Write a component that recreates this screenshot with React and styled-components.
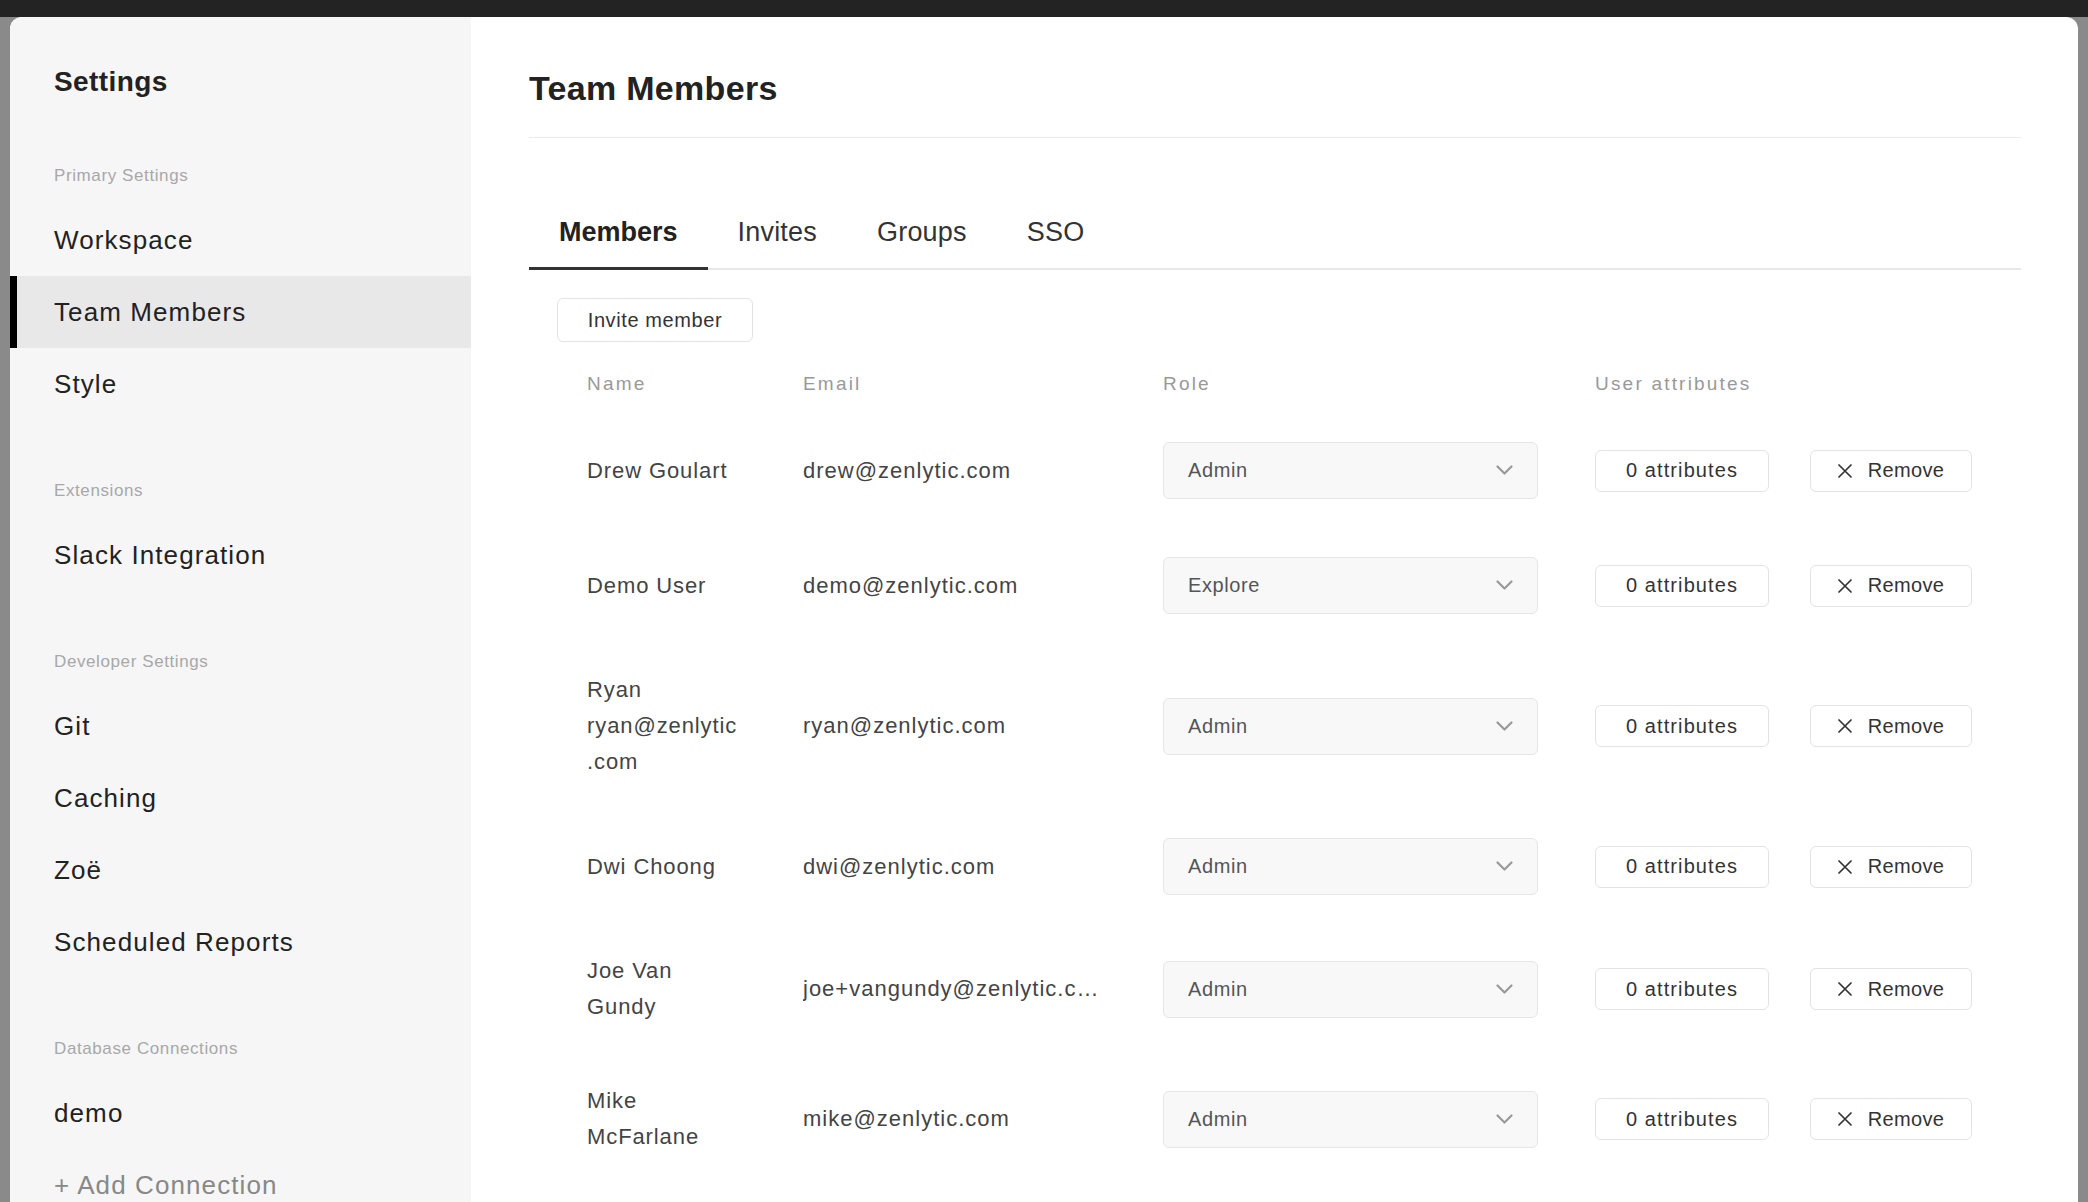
import React from "react";
import styled, { createGlobalStyle } from "styled-components";

const GlobalStyle = createGlobalStyle`
  html, body {
    margin: 0;
    padding: 0;
  }
  body {
    font-family: "Liberation Sans", Arial, sans-serif;
    color: #222;
    overflow: hidden;
  }
  * {
    box-sizing: border-box;
  }
`;

const Page = styled.div`
  height: 100vh;
  display: flex;
  flex-direction: column;
  background: #8a8a8a;
  overflow: hidden;
`;

const TopBar = styled.div`
  height: 17px;
  flex: none;
  background: #232323;
`;

const Backdrop = styled.div`
  flex: 1;
  min-height: 0;
  padding: 0 10px;
`;

const Modal = styled.div`
  height: 100%;
  display: flex;
  background: #fff;
  border-radius: 12px 12px 0 0;
  overflow: hidden;
`;

const Sidebar = styled.aside`
  width: 461px;
  flex: none;
  background: #f6f6f6;
  padding-top: 47px;
`;

const SidebarTitle = styled.div`
  padding: 0 0 5px 44px;
  font-size: 28px;
  line-height: 36px;
  font-weight: 700;
  letter-spacing: 0.4px;
  color: #222;
`;

const Section = styled.div`
  margin-top: 59px;
`;

const SectionLabel = styled.div`
  padding-left: 44px;
  font-size: 17px;
  line-height: 24px;
  letter-spacing: 0.6px;
  color: #a8a8a8;
  margin-bottom: 16px;
`;

const NavItem = styled.div`
  height: 72px;
  line-height: 72px;
  padding-left: ${({ $active }) => ($active ? "37px" : "44px")};
  border-left: ${({ $active }) => ($active ? "7px solid #000" : "none")};
  background: ${({ $active }) => ($active ? "#e8e8e8" : "transparent")};
  font-size: 26px;
  letter-spacing: 1.1px;
  color: ${({ $muted }) => ($muted ? "#888" : "#222")};
  white-space: nowrap;
`;

const Main = styled.main`
  flex: 1;
  min-width: 0;
  padding: 49px 57px 0 58px;
`;

const PageHeader = styled.div`
  padding-bottom: 27px;
  border-bottom: 1px solid #ececec;
`;

const PageTitle = styled.h1`
  margin: 0;
  font-size: 34px;
  line-height: 44px;
  font-weight: 700;
  letter-spacing: 0.3px;
  color: #222;
`;

const TabBar = styled.div`
  display: flex;
  margin-top: 76px;
  border-bottom: 2px solid #e8e8e8;
`;

const Tab = styled.div`
  padding: 0 30px 17px;
  margin-bottom: -2px;
  border-bottom: 3px solid ${({ $active }) => ($active ? "#333" : "transparent")};
  font-size: 27px;
  line-height: 36px;
  font-weight: ${({ $active }) => ($active ? 700 : 400)};
  letter-spacing: ${({ $active }) => ($active ? "0" : "0.2px")};
  color: ${({ $active }) => ($active ? "#222" : "#333")};
`;

const Toolbar = styled.div`
  margin-top: 28px;
  padding-left: 28px;
`;

const OutlineButton = styled.button`
  display: inline-flex;
  align-items: center;
  justify-content: center;
  gap: 16px;
  width: ${({ $width }) => $width}px;
  height: ${({ $tall }) => ($tall ? "44px" : "42px")};
  padding: 0;
  background: #fff;
  border: 1px solid #e3e3e3;
  border-radius: 6px;
  font-family: "Liberation Sans", Arial, sans-serif;
  font-size: 20px;
  letter-spacing: ${({ $spacing }) => $spacing || 0.6}px;
  color: #333;
  cursor: pointer;
`;

const Table = styled.div`
  margin-left: 58px;
`;

const Row = styled.div`
  display: grid;
  grid-template-columns: 216px 360px 432px 215px 1fr;
  align-items: center;
  padding: 29px 0;
`;

const HeadRow = styled(Row)`
  padding: 0;
  margin-top: 30px;
  margin-bottom: 17px;
`;

const HeadCell = styled.div`
  font-size: 19px;
  line-height: 24px;
  letter-spacing: 2.2px;
  color: #999;
`;

const NameCell = styled.div`
  max-width: 155px;
  font-size: 22px;
  line-height: 36px;
  letter-spacing: 0.9px;
  color: #444;
  overflow-wrap: anywhere;
`;

const EmailCell = styled.div`
  max-width: 300px;
  font-size: 22px;
  line-height: 36px;
  letter-spacing: 1px;
  color: #444;
  white-space: nowrap;
  overflow: hidden;
  text-overflow: ellipsis;
`;

const Select = styled.div`
  width: 375px;
  height: 57px;
  display: flex;
  align-items: center;
  justify-content: space-between;
  padding: 0 24px;
  background: #f8f8f8;
  border: 1px solid #e6e6e6;
  border-radius: 6px;
  font-size: 20px;
  letter-spacing: 0.6px;
  color: #555;
`;

const Chevron = () => (
  <svg width="17" height="11" viewBox="0 0 17 11" fill="none">
    <polyline points="1.5,1.5 8.5,8.5 15.5,1.5" stroke="#999" strokeWidth="2.2" strokeLinecap="round" strokeLinejoin="round" />
  </svg>
);

const CloseIcon = () => (
  <svg width="14" height="14" viewBox="0 0 14 14" fill="none">
    <path d="M1 1 13 13M13 1 1 13" stroke="#333" strokeWidth="1.7" strokeLinecap="round" />
  </svg>
);

const nav = [
  { label: "Primary Settings", items: ["Workspace", "Team Members", "Style"] },
  { label: "Extensions", items: ["Slack Integration"] },
  { label: "Developer Settings", items: ["Git", "Caching", "Zoë", "Scheduled Reports"] },
  { label: "Database Connections", items: ["demo", "+ Add Connection"] },
];

const members = [
  { name: "Drew Goulart", email: "drew@zenlytic.com", role: "Admin" },
  { name: "Demo User", email: "demo@zenlytic.com", role: "Explore" },
  { name: "Ryan ryan@zenlytic.com", email: "ryan@zenlytic.com", role: "Admin" },
  { name: "Dwi Choong", email: "dwi@zenlytic.com", role: "Admin" },
  { name: "Joe Van Gundy", email: "joe+vangundy@zenlytic.com", role: "Admin" },
  { name: "Mike McFarlane", email: "mike@zenlytic.com", role: "Admin" },
];

const tabs = ["Members", "Invites", "Groups", "SSO"];

export default function App() {
  return (
    <Page>
      <GlobalStyle />
      <TopBar />
      <Backdrop>
        <Modal>
          <Sidebar>
            <SidebarTitle>Settings</SidebarTitle>
            {nav.map((section) => (
              <Section key={section.label}>
                <SectionLabel>{section.label}</SectionLabel>
                {section.items.map((item) => (
                  <NavItem
                    key={item}
                    $active={item === "Team Members"}
                    $muted={item.startsWith("+")}
                  >
                    {item}
                  </NavItem>
                ))}
              </Section>
            ))}
          </Sidebar>

          <Main>
            <PageHeader>
              <PageTitle>Team Members</PageTitle>
            </PageHeader>

            <TabBar>
              {tabs.map((t) => (
                <Tab key={t} $active={t === "Members"}>
                  {t}
                </Tab>
              ))}
            </TabBar>

            <Toolbar>
              <OutlineButton $tall $width={196}>Invite member</OutlineButton>
            </Toolbar>

            <Table>
              <HeadRow>
                <HeadCell>Name</HeadCell>
                <HeadCell>Email</HeadCell>
                <HeadCell>Role</HeadCell>
                <HeadCell>User attributes</HeadCell>
                <div />
              </HeadRow>
              {members.map((m) => (
                <Row key={m.email}>
                  <NameCell>{m.name}</NameCell>
                  <EmailCell>{m.email}</EmailCell>
                  <div>
                    <Select>
                      <span>{m.role}</span>
                      <Chevron />
                    </Select>
                  </div>
                  <div>
                    <OutlineButton $width={174} $spacing={1.1}>0 attributes</OutlineButton>
                  </div>
                  <div>
                    <OutlineButton $width={162} $spacing={0.3}>
                      <CloseIcon />
                      Remove
                    </OutlineButton>
                  </div>
                </Row>
              ))}
            </Table>
          </Main>
        </Modal>
      </Backdrop>
    </Page>
  );
}
